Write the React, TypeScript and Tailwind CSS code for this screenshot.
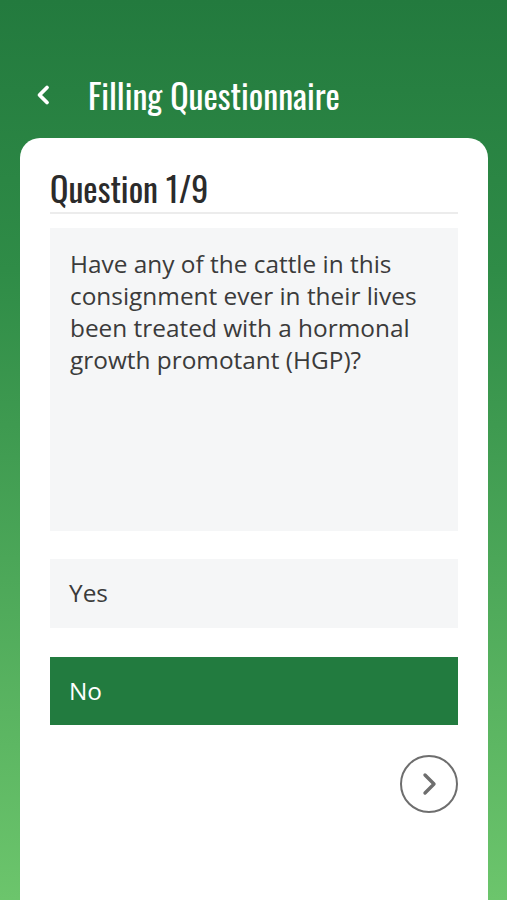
import React from "react";

const heading = "font-['Oswald','Liberation_Sans_Narrow','DejaVu_Sans_Condensed',sans-serif]";
const body = "font-['Open_Sans',sans-serif]";

export default function App() {
  const [answer, setAnswer] = React.useState<"yes" | "no">("no");

  return (
    <div className="flex h-[900px] w-full flex-col overflow-hidden bg-[linear-gradient(to_bottom,#237a3e_0%,#2f8c47_30%,#6cc56c_100%)]">
      <header className="flex h-[138px] items-center gap-[33px] px-[35px] pt-[52px]">
        <button className="flex h-8 w-5 items-center text-white">
          <svg width="16" height="24" viewBox="0 0 16 24" fill="none">
            <path d="M12 4.5 L4.5 12 L12 19.5" stroke="white" strokeWidth="3.8" strokeLinecap="round" strokeLinejoin="round" />
          </svg>
        </button>
        <h1 className={`${heading} text-[34px] leading-none text-white`}>
          Filling Questionnaire
        </h1>
      </header>

      <main className="ml-[20px] mr-[19px] flex-1 rounded-t-[20px] bg-white pl-[30px] pr-[30px] pt-[30px]">
        <div className="border-b-2 border-[#ececec] pb-[4px]">
          <h2 className={`${heading} text-[34px] leading-[40px] text-[#2b2b2b]`}>
            Question 1/9
          </h2>
        </div>

        <div className="mt-[14px] h-[303px] bg-[#f5f6f7] px-[20px] pt-[20px]">
          <p className={`${body} text-[24.4px] leading-[32px] text-[#3b3b3b]`}>
            Have any of the cattle in this consignment ever in their lives been treated with a hormonal growth promotant (HGP)?
          </p>
        </div>

        <div className="mt-[28px] flex flex-col gap-[29px]">
          <button
            onClick={() => setAnswer("yes")}
            className={`flex h-[69px] items-center px-[19px] text-left ${body} text-[24.4px] ${
              answer === "yes" ? "bg-[#227b3f] text-white" : "bg-[#f5f6f7] text-[#3b3b3b]"
            }`}
          >
            Yes
          </button>
          <button
            onClick={() => setAnswer("no")}
            className={`flex h-[68px] items-center px-[19px] text-left ${body} text-[24.4px] ${
              answer === "no" ? "bg-[#227b3f] text-white" : "bg-[#f5f6f7] text-[#3b3b3b]"
            }`}
          >
            No
          </button>
        </div>

        <div className="mt-[30px] flex justify-end">
          <button className="flex h-[58px] w-[58px] items-center justify-center rounded-full border-2 border-[#6e6e6e]">
            <svg width="24" height="28" viewBox="0 0 24 28" fill="none">
              <path d="M8 5 L17 14 L8 23" stroke="#6e6e6e" strokeWidth="3.4" strokeLinecap="round" strokeLinejoin="round" />
            </svg>
          </button>
        </div>
      </main>
    </div>
  );
}
